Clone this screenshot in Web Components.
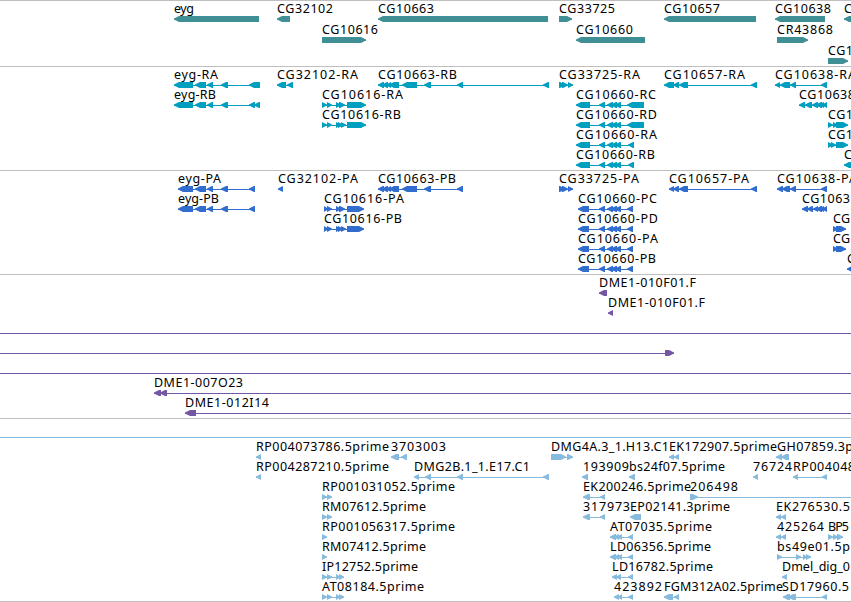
<!DOCTYPE html>
<html lang="en">
<head>
<meta charset="utf-8">
<title>Genome map</title>
<style>
  body {
    margin: 0;
    background: #fff;
    color: #000;
    font-family: "Noto Sans", "DejaVu Sans", sans-serif;
    font-size: 12.5px;
    overflow: hidden;
  }
</style>
</head>
<body>
<genome-map></genome-map>

<template id="map-template">
  <style>
    :host { display: flex; flex-direction: column; width: 851px; height: 602px; overflow: hidden; }
    .genes { --ink: #3f8f94; --row: 21px; --pad: 2px; }
    .transcripts { --ink: #009fbf; }
    .proteins { --ink: #306dce; }
    .clones { --ink: #7458a6; }
    .ests { --ink: #87bbdd; --pad: 2px; }
    .end { height: 1px; background: #bfbfbf; }
  </style>
  <map-track class="genes"></map-track>
  <map-track class="transcripts"></map-track>
  <map-track class="proteins"></map-track>
  <map-track class="clones"></map-track>
  <map-track class="ests"></map-track>
  <div class="end"></div>
</template>

<template id="track-template">
  <style>
    :host {
      display: flex;
      flex-direction: column;
      flex: none;
      border-top: 1px solid #bfbfbf;
      padding-bottom: var(--pad, 3px);
    }
  </style>
  <slot></slot>
</template>

<template id="row-template">
  <style>
    :host { display: block; position: relative; height: var(--row, 20px); }
  </style>
  <slot></slot>
</template>

<template id="feature-template">
  <style>
    :host { display: block; position: absolute; top: 0; }
    svg { display: block; width: 1px; height: 21px; overflow: visible; }
    text { fill: #000; }
    path, rect { fill: var(--ink); }
  </style>
  <svg></svg>
</template>

<script>
// feature: [label, label x, label width, direction, exons, line end]
const tracks = {
  genes: [
    [
      ['eyg', 174, 20, '<', '174-259'],
      ['CG32102', 277, 56, '<', '277-290'],
      ['CG10663', 378, 56, '<', '378-548'],
      ['CG33725', 559, 56, '>', '559-572'],
      ['CG10657', 664, 56, '<', '664-756'],
      ['CG10638', 775, 56, '<', '775-825'],
      ['C', 844, 8, '<', '844-870']
    ],
    [
      ['CG10616', 322, 56, '>', '322-366'],
      ['CG10660', 576, 57, '<', '576-645'],
      ['CR43868', 777, 56, '>', '777-808']
    ],
    [
      ['CG1', 828, 25, '>', '828-848']
    ]
  ],
  transcripts: [
    [
      ['eyg-RA', 174, 44, '<', '174-193 195-206 207-213 221-228 249-260'],
      ['CG32102-RA', 277, 81, '<', '277-286 287-293'],
      ['CG10663-RB', 378, 79, '<', '378-384 382-388 386-391 389-399 402-417 424-431 457-463 543-549'],
      ['CG33725-RA', 559, 81, '>', '559-565 562-568 568-573'],
      ['CG10657-RA', 664, 81, '<', '664-674 673-679 679-688 751-757'],
      ['CG10638-RA', 775, 81, '<', '775-780 780-790 790-796 821-827']
    ],
    [
      ['eyg-RB', 174, 42, '<', '174-193 195-206 207-213 221-228 249-255 254-260'],
      ['CG10616-RA', 322, 81, '>', '322-327 327-332 336-341 339-345 347-366'],
      ['CG10660-RC', 576, 80, '<', '576-590 599-605 607-613 611-617 615-621 627-644'],
      ['CG10638', 799, 56, '<', '799-805 805-812 812-818 816-822 819-824 822-827']
    ],
    [
      ['CG10616-RB', 322, 79, '>', '322-327 327-332 336-341 338-343 341-346 347-366'],
      ['CG10660-RD', 576, 81, '<', '576-590 599-605 607-613 611-617 615-621 627-644'],
      ['CG1', 828, 25, '>', '828-833 833-838 836-848']
    ],
    [
      ['CG10660-RA', 576, 81, '<', '576-590 599-605 607-613 611-617 615-621 628-634'],
      ['CG1', 828, 25, '>', '828-833 831-836 836-848']
    ],
    [
      ['CG10660-RB', 576, 79, '<', '576-590 599-605 607-613 611-617 615-621 628-634'],
      ['C', 844, 8, '<', '844-870']
    ]
  ],
  proteins: [
    [
      ['eyg-PA', 178, 43, '<', '178-193 195-206 207-213 221-228 249-255'],
      ['CG32102-PA', 278, 80, '<', '278-283'],
      ['CG10663-PB', 378, 78, '<', '378-384 382-388 386-391 389-399 402-417 424-431 457-463'],
      ['CG33725-PA', 559, 80, '>', '559-565 562-568 568-573'],
      ['CG10657-PA', 669, 80, '<', '669-674 673-679 679-688 751-757'],
      ['CG10638-PA', 777, 80, '<', '777-783 782-790 790-796 821-827']
    ],
    [
      ['eyg-PB', 178, 41, '<', '178-193 195-206 207-213 221-228 249-255'],
      ['CG10616-PA', 324, 80, '>', '324-328 327-332 336-341 339-345 347-364'],
      ['CG10660-PC', 578, 79, '<', '578-589 599-605 607-613 611-617 615-621 627-633'],
      ['CG1063', 802, 48, '<', '802-808 807-813 813-818 816-822 819-824 822-827']
    ],
    [
      ['CG10616-PB', 324, 78, '>', '324-328 327-332 336-341 338-343 341-346 347-364'],
      ['CG10660-PD', 578, 80, '<', '578-589 599-605 607-613 611-617 615-621 627-633'],
      ['CG', 833, 17, '>', '833-838 836-846']
    ],
    [
      ['CG10660-PA', 578, 80, '<', '578-589 599-605 607-613 611-617 615-621 627-633'],
      ['CG', 833, 17, '>', '833-838 836-846']
    ],
    [
      ['CG10660-PB', 578, 78, '<', '578-589 599-605 607-613 611-617 615-621 627-633'],
      ['C', 847, 8, '<', '847-870']
    ]
  ],
  clones: [
    [['DME1-010F01.F', 599, 97, '<', '599-607']],
    [['DME1-010F01.F', 608, 97, '<', '608-613']],
    [['', 0, 0, '<', '', 851]],
    [['', 0, 0, '>', '665-674']],
    [['', 0, 0, '<', '', 851]],
    [['DME1-007O23', 154, 89, '<', '154-161 160-167', 851]],
    [['DME1-012I14', 185, 84, '<', '185-196', 851]]
  ],
  ests: [
    [['', 0, 0, '<', '', 851]],
    [
      ['RP004073786.5prime', 256, 133, '<', '256-261'],
      ['3703003', 391, 55, '<', '391-399 401-407'],
      ['DMG4A.3_1.H13.C1', 551, 118, '>', '551-566 567-573'],
      ['EK172907.5prime', 669, 108, '<', '669-674 674-679'],
      ['GH07859.3p', 777, 76, '<', '776-782 781-789']
    ],
    [
      ['RP004287210.5prime', 256, 133, '<', '256-261'],
      ['DMG2B.1_1.E17.C1', 414, 116, '<', '414-419 425-431 457-463 543-549'],
      ['193909', 583, 46, '<', '582-588'],
      ['bs24f07.5prime', 629, 96, '<', '629-635'],
      ['76724', 753, 39, '<', '753-758'],
      ['RP004048', 793, 62, '<', '793-798 822-827']
    ],
    [
      ['RP001031052.5prime', 322, 133, '>', '322-327 327-332'],
      ['EK200246.5prime', 583, 108, '<', '583-590 600-605'],
      ['206498', 690, 48, '>', '690-698', 851]
    ],
    [
      ['RM07612.5prime', 322, 104, '>', '322-327 327-332'],
      ['317973', 583, 47, '<', '583-590 600-605'],
      ['EP02141.3prime', 630, 100, '<', '630-641'],
      ['EK276530.5', 776, 74, '<', '776-781 781-786']
    ],
    [
      ['RP001056317.5prime', 322, 133, '>', '322-327'],
      ['AT07035.5prime', 610, 102, '<', '610-616 614-619 617-622 628-633'],
      ['425264', 777, 47, '<', '776-781 781-786'],
      ['BP5', 828, 21, '>', '828-833 833-838 837-843']
    ],
    [
      ['RM07412.5prime', 322, 104, '>', '322-327'],
      ['LD06356.5prime', 610, 101, '<', '610-616 614-619 617-622 628-633'],
      ['bs49e01.5p', 777, 73, '>', '777-782 796-801 803-807 806-811']
    ],
    [
      ['IP12752.5prime', 322, 96, '>', '322-327 327-332 336-340 339-344'],
      ['LD16782.5prime', 612, 101, '<', '612-617 616-621 628-633'],
      ['Dmel_dig_0', 782, 68, '<', '782-787']
    ],
    [
      ['AT08184.5prime', 322, 102, '>', '322-327 327-332 336-340 339-344'],
      ['423892', 614, 48, '<', '614-619 618-622 628-633'],
      ['FGM312A02.5prime', 664, 119, '<', '664-673 674-679'],
      ['SD17960.5', 782, 67, '<', '783-790 788-796 822-827']
    ]
  ]
}

const NS = 'http://www.w3.org/2000/svg'

function attach (host, id) {
  const root = host.attachShadow({ mode: 'open' })
  root.appendChild(document.getElementById(id).content.cloneNode(true))
  return root
}

// An exon is a 6px bar whose leading end tapers to a point.
function exonPath (from, to, dir) {
  const tip = Math.min(5, to - from)
  if (dir === '<') {
    return `M${from} 17.5L${from + tip} 15H${to}V21H${from + tip}L${from} 18.5Z`
  }
  return `M${to} 17.5L${to - tip} 15H${from}V21H${to - tip}L${to} 18.5Z`
}

customElements.define('map-feature',
  class extends HTMLElement {
    #svg

    constructor () {
      super()
      this.#svg = attach(this, 'feature-template').querySelector('svg')
    }

    set data ([label, x, width, dir, exons, lineEnd]) {
      this.style.left = x + 'px'
      const spans = exons ? exons.split(' ').map(e => e.split('-').map(n => n - x)) : []
      const start = label ? spans[0][0] : 0
      const end = lineEnd ? lineEnd - x : spans[spans.length - 1][1]

      this.#add('rect', { x: start, y: 18, width: end - start, height: 1 })
      for (const [from, to] of spans) {
        this.#add('path', { d: exonPath(from, to, dir) })
      }
      if (label) {
        const text = this.#add('text', { x: 0, y: 12, textLength: width })
        text.textContent = label
      }
    }

    #add (name, attrs) {
      const node = document.createElementNS(NS, name)
      for (const key in attrs) node.setAttribute(key, attrs[key])
      return this.#svg.appendChild(node)
    }
  }
)

customElements.define('map-row',
  class extends HTMLElement {
    constructor () {
      super()
      attach(this, 'row-template')
    }
  }
)

customElements.define('map-track',
  class extends HTMLElement {
    constructor () {
      super()
      attach(this, 'track-template')
    }

    set rows (rows) {
      for (const features of rows) {
        const row = document.createElement('map-row')
        for (const item of features) {
          const feature = document.createElement('map-feature')
          feature.data = item
          row.appendChild(feature)
        }
        this.appendChild(row)
      }
    }
  }
)

customElements.define('genome-map',
  class extends HTMLElement {
    constructor () {
      super()
      const root = attach(this, 'map-template')
      customElements.upgrade(root)
      for (const name in tracks) {
        root.querySelector('.' + name).rows = tracks[name]
      }
    }
  }
)
</script>
</body>
</html>
